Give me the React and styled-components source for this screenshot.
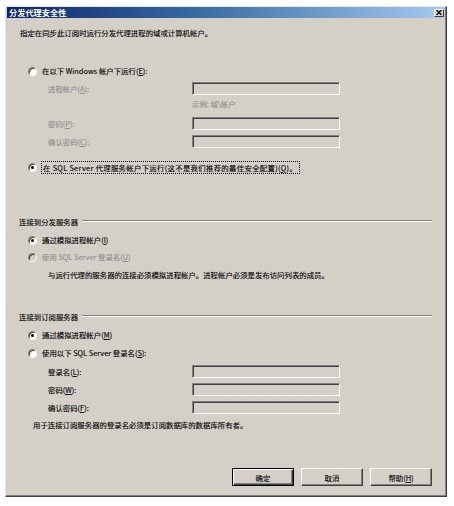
import React from "react";
import styled, { createGlobalStyle } from "styled-components";

const Global = createGlobalStyle`
  html, body { margin: 0; padding: 0; background: #ffffff; }
  body { font-family: "Noto Sans CJK SC", "Noto Sans", sans-serif; }
`;

const Window = styled.div`
  margin: 6px 0 0 5px;
  width: 442px;
  height: 491px;
  box-sizing: border-box;
  background: #d4d0c8;
  border: 1px solid;
  border-color: #e8e6e0 #404040 #404040 #e8e6e0;
  box-shadow: inset -1px -1px #808080;
  display: flex;
  flex-direction: column;
`;

const TitleBar = styled.div`
  height: 11px;
  margin: 0 1px;
  background: linear-gradient(to right, #0a246a 0%, #3a6ea5 45%, #a6caf0 100%);
  display: flex;
  align-items: center;
  justify-content: space-between;
  padding: 0 1px 0 2px;
`;

const Title = styled.span`
  color: #ffffff;
  font-weight: bold;
  font-size: 8.2px;
  line-height: 11px;
  white-space: nowrap;
`;

const CloseBtn = styled.span`
  width: 10px;
  height: 8px;
  box-sizing: border-box;
  background: #d4d0c8;
  border: 1px solid;
  border-color: #ffffff #404040 #404040 #ffffff;
  display: flex;
  align-items: center;
  justify-content: center;
`;

const Content = styled.div`
  flex: 1;
  display: flex;
  flex-direction: column;
  padding: 0 14px 10px 14px;
  font-size: 7.4px;
  color: #000;
  -webkit-text-stroke: 0.12px;
`;

const Row = styled.div`
  margin-top: ${(p) => p.$mt || 0}px;
  height: ${(p) => p.$h || 14}px;
  padding-left: ${(p) => p.$indent || 0}px;
  display: flex;
  align-items: center;
  white-space: nowrap;
  line-height: 12px;
  color: ${(p) => (p.$disabled ? "#8e8e8e" : "#000")};
`;

const Label = styled.span`
  width: ${(p) => p.$w}px;
  flex: none;
`;

const Input = styled.div`
  width: 148px;
  height: 13px;
  box-sizing: border-box;
  border: 1px solid;
  border-color: #808080 #ffffff #ffffff #808080;
  box-shadow: inset 1px 1px #404040, inset -1px -1px #d4d0c8;
  background: #d4d0c8;
`;

const Radio = styled.span`
  position: relative;
  width: 9px;
  height: 9px;
  flex: none;
  box-sizing: border-box;
  border-radius: 50%;
  border: 1px solid;
  border-color: #808080 #ffffff #ffffff #808080;
  box-shadow: inset 1px 1px #404040;
  background: ${(p) => (p.$disabled ? "#d4d0c8" : "#ffffff")};
  margin-right: 5px;
  &::after {
    content: "";
    display: ${(p) => (p.$checked ? "block" : "none")};
    position: absolute;
    left: 2px;
    top: 2px;
    width: 3px;
    height: 3px;
    border-radius: 50%;
    background: #000;
  }
`;

const Focus = styled.span`
  outline: 1px dotted #000;
  outline-offset: 0;
  padding: 0 2px 0 1px;
  line-height: 11px;
  letter-spacing: 0.3px;
`;

const U = styled.span`
  text-decoration: underline;
`;

const Section = styled.div`
  margin-top: ${(p) => p.$mt || 0}px;
  height: 14px;
  display: flex;
  align-items: center;
  white-space: nowrap;
`;

const SectionTitle = styled.span`
  flex: none;
  margin-left: -1px;
`;

const Etch = styled.div`
  flex: 1;
  height: 0;
  border-top: 1px solid #808080;
  border-bottom: 1px solid #ffffff;
  margin-left: 4px;
`;

const ButtonBar = styled.div`
  margin-top: auto;
  display: flex;
  justify-content: flex-end;
  gap: 7px;
`;

const Button = styled.div`
  width: 62px;
  height: 18px;
  box-sizing: border-box;
  display: flex;
  align-items: center;
  justify-content: center;
  background: #d4d0c8;
  border: 1px solid;
  border-color: ${(p) => (p.$default ? "#000 #000 #000 #000" : "#ffffff #404040 #404040 #ffffff")};
  box-shadow: ${(p) =>
    p.$default
      ? "inset 1px 1px #ffffff, inset -1px -1px #404040, inset -2px -2px #808080"
      : "inset -1px -1px #808080"};
  font-size: 7.4px;
`;

export default function App() {
  return (
    <>
      <Global />
      <Window>
        <TitleBar>
          <Title>分发代理安全性</Title>
          <CloseBtn>
            <svg width="6" height="5" viewBox="0 0 6 5">
              <path d="M0.5 0 L5.5 5 M5.5 0 L0.5 5" stroke="#000" strokeWidth="1.3" />
            </svg>
          </CloseBtn>
        </TitleBar>
        <Content>
          <Row $mt={8}>指定在同步此订阅时运行分发代理进程的域或计算机帐户。</Row>

          <Row $mt={24} $indent={8}>
            <Radio />
            在以下 Windows 帐户下运行(<U>E</U>):
          </Row>
          <Row $mt={4} $h={13} $indent={28} $disabled>
            <Label $w={144}>进程帐户(<U>A</U>):</Label>
            <Input />
          </Row>
          <Row $mt={2} $indent={172} $disabled>
            示例: 域\帐户
          </Row>
          <Row $mt={6} $h={13} $indent={28} $disabled>
            <Label $w={144}>密码(<U>P</U>):</Label>
            <Input />
          </Row>
          <Row $mt={5} $h={13} $indent={28} $disabled>
            <Label $w={144}>确认密码(<U>C</U>):</Label>
            <Input />
          </Row>
          <Row $mt={12} $indent={8}>
            <Radio $checked />
            <Focus>在 SQL Server 代理服务帐户下运行(这不是我们推荐的最佳安全配置)(<U>Q</U>)。</Focus>
          </Row>

          <Section $mt={40}>
            <SectionTitle>连接到分发服务器</SectionTitle>
            <Etch />
          </Section>
          <Row $mt={5} $indent={8}>
            <Radio $checked />
            通过模拟进程帐户(<U>I</U>)
          </Row>
          <Row $mt={3} $indent={8} $disabled>
            <Radio $disabled />
            使用 SQL Server 登录名(<U>U</U>)
          </Row>
          <Row $mt={4} $indent={28}>
            与运行代理的服务器的连接必须模拟进程帐户。进程帐户必须是发布访问列表的成员。
          </Row>

          <Section $mt={27}>
            <SectionTitle>连接到订阅服务器</SectionTitle>
            <Etch />
          </Section>
          <Row $mt={5} $indent={8}>
            <Radio $checked />
            通过模拟进程帐户(<U>M</U>)
          </Row>
          <Row $mt={4} $indent={8}>
            <Radio />
            使用以下 SQL Server 登录名(<U>S</U>):
          </Row>
          <Row $mt={5} $h={13} $indent={28}>
            <Label $w={144}>登录名(<U>L</U>):</Label>
            <Input />
          </Row>
          <Row $mt={5} $h={13} $indent={28}>
            <Label $w={144}>密码(<U>W</U>):</Label>
            <Input />
          </Row>
          <Row $mt={5} $h={13} $indent={28}>
            <Label $w={144}>确认密码(<U>F</U>):</Label>
            <Input />
          </Row>
          <Row $mt={4} $indent={13}>
            用于连接订阅服务器的登录名必须是订阅数据库的数据库所有者。
          </Row>

          <ButtonBar>
            <Button $default>确定</Button>
            <Button>取消</Button>
            <Button>帮助(<U>H</U>)</Button>
          </ButtonBar>
        </Content>
      </Window>
    </>
  );
}
